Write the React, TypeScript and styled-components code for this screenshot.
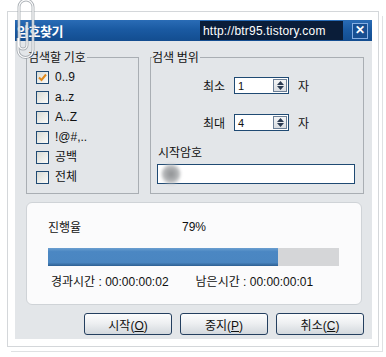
import React from 'react';
import styled, { createGlobalStyle } from 'styled-components';

const GlobalStyle = createGlobalStyle`
  body {
    margin: 0;
    background: #fff;
    font-family: 'Liberation Sans', 'Noto Sans CJK KR', sans-serif;
    font-size: 12px;
    color: #111;
  }
`;

const Stage = styled.div`
  position: relative;
  width: 386px;
  height: 357px;
  box-sizing: border-box;
  padding: 11px 0 0 7px;
  overflow: hidden;
`;

const Paper = styled.div`
  width: 372px;
  height: 336px;
  box-sizing: border-box;
  border: 1px solid #d4d7da;
  background: #fff;
  padding: 8px 0 0 7px;
  box-shadow: 3px 4px 0 0 #fff, 4px 5px 0 0 #dfe1e3;
`;

const Dialog = styled.div`
  width: 357px;
  display: flex;
  flex-direction: column;
`;

const TitleBar = styled.div`
  height: 21px;
  display: flex;
  align-items: center;
  padding-left: 2px;
  background: linear-gradient(#2a6cb6, #1a5aa2 45%, #134d90);
`;

const TitleText = styled.span`
  font-family: 'Noto Sans CJK KR', sans-serif;
  font-weight: 700;
  font-size: 13px;
  color: #fff;
  letter-spacing: -0.5px;
`;

const UrlBox = styled.div`
  margin-left: auto;
  width: 143px;
  height: 19px;
  box-sizing: border-box;
  padding: 2px 0 0 3px;
  background: #0a1d39;
  color: #fff;
  font-size: 12px;
  line-height: 16px;
  letter-spacing: 0.2px;
`;

const CloseButton = styled.div`
  width: 16px;
  height: 16px;
  box-sizing: border-box;
  margin: 0 4px 0 9px;
  border: 1px solid #86afe3;
  background: #174f92;
  color: #fff;
  font-weight: 700;
  font-size: 12px;
  line-height: 13px;
  text-align: center;
`;

const Body = styled.div`
  background: #e3e6e9;
  padding: 9px 8px 4px 11px;
  display: flex;
  flex-direction: column;
`;

const GroupRow = styled.div`
  display: flex;
  gap: 11px;
`;

const Group = styled.fieldset<{ $width: number }>`
  width: ${p => p.$width}px;
  height: 144px;
  box-sizing: border-box;
  margin: 0;
  padding: 0;
  border: 1px solid #a9aeb3;
  display: flex;
  flex-direction: column;
`;

const Legend = styled.legend`
  margin-left: 1px;
  padding: 0 1px 0 0;
  line-height: 14px;
  font-family: 'Noto Sans CJK KR', sans-serif;
  font-size: 12px;
  background: #e3e6e9;
`;

const CheckList = styled.div`
  display: flex;
  flex-direction: column;
  gap: 6px;
  padding: 6px 0 0 9px;
`;

const CheckRow = styled.label`
  display: flex;
  align-items: center;
  gap: 6px;
  height: 14px;
  line-height: 14px;
`;

const Box = styled.span`
  width: 13px;
  height: 13px;
  box-sizing: border-box;
  border: 1px solid #1f4a73;
  background: linear-gradient(135deg, #d9dcd6, #fbfbf9);
  display: flex;
  align-items: center;
  justify-content: center;
`;

const RangeArea = styled.div`
  display: flex;
  flex-direction: column;
  padding: 13px 0 0 6px;
`;

const SpinRow = styled.div<{ $gap: number }>`
  display: flex;
  align-items: center;
  margin-top: ${p => p.$gap}px;
  padding-left: 46px;
`;

const SpinLabel = styled.span`
  width: 24px;
  margin-right: 7px;
  font-family: 'Noto Sans CJK KR', sans-serif;
  line-height: 14px;
`;

const SpinBox = styled.div`
  width: 55px;
  height: 17px;
  box-sizing: border-box;
  border: 1px solid #1f4a73;
  background: #fff;
  display: flex;
  align-items: center;
  padding: 0 1px 0 3px;
  font-size: 11px;
`;

const SpinValue = styled.span`
  flex: 1;
`;

const SpinButtons = styled.div`
  width: 14px;
  height: 13px;
  box-sizing: border-box;
  border: 1px solid #6c7f96;
  background: linear-gradient(#f4f5f6, #d9dde2);
  display: flex;
  flex-direction: column;
  align-items: center;
  justify-content: space-around;
`;

const Unit = styled.span`
  margin-left: 9px;
  font-family: 'Noto Sans CJK KR', sans-serif;
`;

const StartLabel = styled.span`
  margin-top: 14px;
  padding-left: 1px;
  line-height: 14px;
  font-family: 'Noto Sans CJK KR', sans-serif;
`;

const TextInput = styled.div`
  position: relative;
  margin-top: 5px;
  width: 198px;
  height: 20px;
  box-sizing: border-box;
  border: 1px solid #1f4a73;
  background: #fff;
`;

const Smudge = styled.span`
  position: absolute;
  left: 3px;
  top: -2px;
  width: 20px;
  height: 22px;
  border-radius: 50%;
  background: radial-gradient(circle, #8d8f92 0%, #b6b8ba 50%, rgba(255, 255, 255, 0) 75%);
  filter: blur(1.5px);
`;

const ProgressPanel = styled.div`
  margin-top: 8px;
  width: 336px;
  height: 103px;
  box-sizing: border-box;
  border: 1px solid #cfd3d7;
  border-radius: 6px;
  background: #fbfbfc;
  padding: 17px 0 0 21px;
  display: flex;
  flex-direction: column;
`;

const RateRow = styled.div`
  display: flex;
  line-height: 14px;
`;

const RateLabel = styled.span`
  width: 134px;
  font-family: 'Noto Sans CJK KR', sans-serif;
`;

const Track = styled.div`
  margin-top: 14px;
  width: 291px;
  height: 18px;
  background: #d5d6d8;
`;

const Fill = styled.div`
  height: 100%;
  box-sizing: border-box;
  background: linear-gradient(#6b9fd0, #4b87c3 20%, #4a86c1 80%, #2d5f92);
`;

const TimeRow = styled.div`
  display: flex;
  margin-top: 9px;
  padding-left: 3px;
  line-height: 14px;
  gap: 27px;
`;

const ButtonRow = styled.div`
  display: flex;
  justify-content: flex-end;
  gap: 8px;
  margin-top: 8px;
`;

const Button = styled.button`
  width: 88px;
  height: 22px;
  box-sizing: border-box;
  padding: 0;
  border: 1px solid #243f5f;
  border-radius: 3px;
  background: linear-gradient(#fdfdfd, #eef0f2 45%, #d3d8dd);
  font-family: 'Liberation Sans', 'Noto Sans CJK KR', sans-serif;
  font-size: 12px;
  color: #111;
`;

const Clip = styled.svg`
  position: absolute;
  left: 15px;
  top: -2px;
`;

const symbols = [
  { label: '0..9', checked: true },
  { label: 'a..z', checked: false },
  { label: 'A..Z', checked: false },
  { label: '!@#,..', checked: false },
  { label: '공백', checked: false },
  { label: '전체', checked: false },
];

const Spinner: React.FC<{ label: string; value: string; gap: number }> = ({ label, value, gap }) => (
  <SpinRow $gap={gap}>
    <SpinLabel>{label}</SpinLabel>
    <SpinBox>
      <SpinValue>{value}</SpinValue>
      <SpinButtons>
        <svg width="7" height="4" viewBox="0 0 7 4"><path d="M0 4 L3.5 0 L7 4 Z" fill="#2b3b52" /></svg>
        <svg width="7" height="4" viewBox="0 0 7 4"><path d="M0 0 L3.5 4 L7 0 Z" fill="#2b3b52" /></svg>
      </SpinButtons>
    </SpinBox>
    <Unit>자</Unit>
  </SpinRow>
);

const Mnemonic: React.FC<{ text: string; keyChar: string }> = ({ text, keyChar }) => (
  <>
    {text}(<u>{keyChar}</u>)
  </>
);

const App: React.FC = () => {
  const progress = 79;
  return (
    <>
      <GlobalStyle />
      <Stage>
        <Paper>
          <Dialog>
            <TitleBar>
              <TitleText>암호찾기</TitleText>
              <UrlBox>http://btr95.tistory.com</UrlBox>
              <CloseButton>✕</CloseButton>
            </TitleBar>
            <Body>
              <GroupRow>
                <Group $width={113}>
                  <Legend>검색할 기호</Legend>
                  <CheckList>
                    {symbols.map(s => (
                      <CheckRow key={s.label}>
                        <Box>
                          {s.checked && (
                            <svg width="9" height="9" viewBox="0 0 9 9">
                              <path d="M1 4.5 L3.5 7 L8 1.5" stroke="#e08a1e" strokeWidth="2" fill="none" />
                            </svg>
                          )}
                        </Box>
                        <span>{s.label}</span>
                      </CheckRow>
                    ))}
                  </CheckList>
                </Group>
                <Group $width={214}>
                  <Legend>검색 범위</Legend>
                  <RangeArea>
                    <Spinner label="최소" value="1" gap={0} />
                    <Spinner label="최대" value="4" gap={20} />
                    <StartLabel>시작암호</StartLabel>
                    <TextInput>
                      <Smudge />
                    </TextInput>
                  </RangeArea>
                </Group>
              </GroupRow>
              <ProgressPanel>
                <RateRow>
                  <RateLabel>진행율</RateLabel>
                  <span>{progress}%</span>
                </RateRow>
                <Track>
                  <Fill style={{ width: `${progress}%` }} />
                </Track>
                <TimeRow>
                  <span>경과시간 : 00:00:00:02</span>
                  <span>남은시간 : 00:00:00:01</span>
                </TimeRow>
              </ProgressPanel>
              <ButtonRow>
                <Button><Mnemonic text="시작" keyChar="O" /></Button>
                <Button><Mnemonic text="중지" keyChar="P" /></Button>
                <Button><Mnemonic text="취소" keyChar="C" /></Button>
              </ButtonRow>
            </Body>
          </Dialog>
        </Paper>
        <Clip width="20" height="62" viewBox="0 0 20 62">
          <path
            d="M12 24 V47 A4 4 0 0 1 4 47 V9 A7 7 0 0 1 18 9 V52 A7.5 7.5 0 0 1 3 52 V40"
            stroke="#9ba1a7"
            strokeWidth="3"
            fill="none"
            opacity="0.8"
          />
          <path
            d="M12 24 V47 A4 4 0 0 1 4 47 V9 A7 7 0 0 1 18 9 V52 A7.5 7.5 0 0 1 3 52 V40"
            stroke="#fff"
            strokeWidth="1.2"
            fill="none"
          />
        </Clip>
      </Stage>
    </>
  );
};

export default App;
